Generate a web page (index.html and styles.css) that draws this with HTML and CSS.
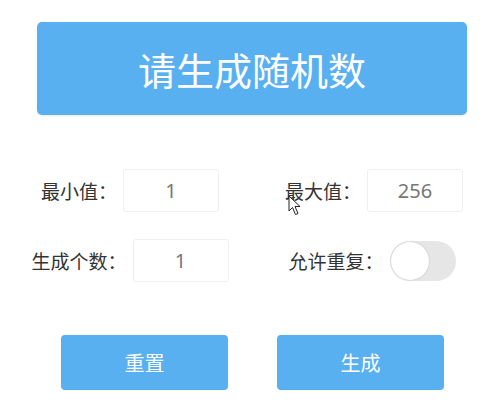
FILE: index.html
```html
<!DOCTYPE html>
<html lang="zh">
<head>
<meta charset="utf-8">
<link rel="stylesheet" href="styles.css">
</head>
<body>
<div class="page">
  <div class="header">请生成随机数</div>
  <div class="form">
    <div class="field"><span class="label">最小值：</span><div class="input">1</div></div>
    <div class="field"><span class="label">最大值：</span><div class="input">256</div></div>
    <div class="field"><span class="label">生成个数：</span><div class="input">1</div></div>
    <div class="field field-toggle"><span class="label">允许重复：</span><div class="toggle"><div class="knob"></div></div></div>
  </div>
  <div class="actions">
    <div class="btn">重置</div>
    <div class="btn">生成</div>
  </div>
  <svg class="cursor" width="14" height="22" viewBox="0 0 14 22"><path d="M1 1 L1 16 L4.5 12.5 L7.5 19.5 L10 18.5 L7 11.5 L12 11.5 Z" fill="#fff" stroke="#222" stroke-width="1"/></svg>
</div>
</body>
</html>
```
FILE: styles.css
```css
html, body {
  margin: 0;
  padding: 0;
  background: #fff;
}
.page {
  position: relative;
  width: 504px;
  height: 400px;
  font-family: "Noto Sans CJK SC", "Noto Sans", sans-serif;
  padding-top: 22px;
  box-sizing: border-box;
}
.header {
  margin: 0 37px;
  height: 93px;
  background: #58b0f1;
  border-radius: 5px;
  color: #fff;
  font-size: 38px;
  display: flex;
  align-items: center;
  justify-content: center;
  box-shadow: 0 1px 2px rgba(0,0,0,0.08);
}
.form {
  margin-top: 54px;
  padding: 0 8px;
  display: grid;
  grid-template-columns: 1fr 1fr;
  row-gap: 27px;
}
.field {
  display: flex;
  align-items: center;
  justify-content: center;
  height: 43px;
  gap: 6px;
}
.field-toggle {
  padding-right: 4px;
}
.label {
  font-size: 19px;
  color: #333;
}
.input {
  width: 96px;
  height: 43px;
  box-sizing: border-box;
  border: 1px solid #efefef;
  border-radius: 3px;
  display: flex;
  align-items: center;
  justify-content: center;
  font-family: "Noto Sans", sans-serif;
  font-size: 20px;
  color: #777;
}
.toggle {
  width: 66px;
  height: 40px;
  border-radius: 20px;
  background: #e6e6e6;
  position: relative;
}
.knob {
  position: absolute;
  left: 1px;
  top: 1px;
  width: 38px;
  height: 38px;
  border-radius: 50%;
  background: #fff;
  box-shadow: 0 0 2px rgba(0,0,0,0.2);
}
.actions {
  margin-top: 53px;
  display: flex;
  justify-content: center;
  gap: 49px;
  padding-left: 1px;
}
.btn {
  width: 167px;
  height: 55px;
  background: #58b0f1;
  border-radius: 4px;
  color: #fff;
  font-size: 20px;
  display: flex;
  align-items: center;
  justify-content: center;
}
.cursor {
  position: absolute;
  left: 288px;
  top: 195px;
}
```
